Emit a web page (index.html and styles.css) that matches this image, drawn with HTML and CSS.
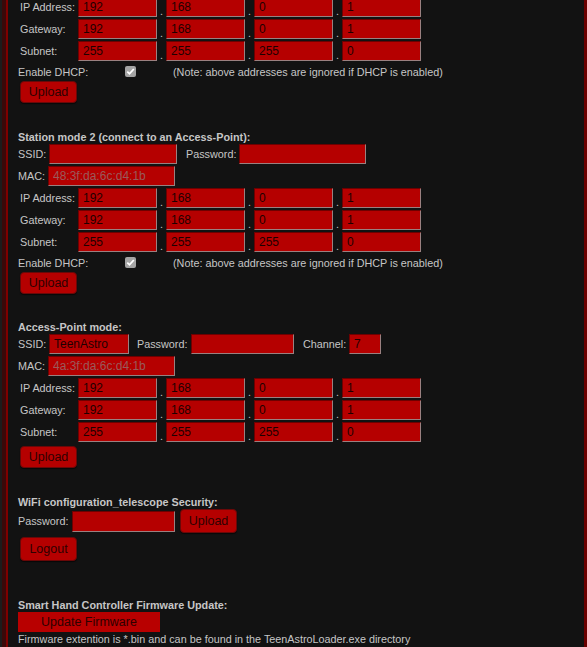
FILE: index.html
```html
<!DOCTYPE html>
<html lang="en">
<head>
  <meta charset="UTF-8">
  <meta name="viewport" content="width=device-width, initial-scale=1.0">
  <title>TeenAstro WiFi</title>
  <link rel="stylesheet" href="styles.css">
</head>
<body>
<div class="frame">
  <div class="page">

    <!-- Station mode 1 (addresses) -->
    <form class="block first">
      <div class="ip-row"><span class="lbl">IP Address:</span><input class="octet" value="192"><span class="dot">.</span><input class="octet" value="168"><span class="dot">.</span><input class="octet" value="0"><span class="dot">.</span><input class="octet" value="1"></div>
      <div class="ip-row"><span class="lbl">Gateway:</span><input class="octet" value="192"><span class="dot">.</span><input class="octet" value="168"><span class="dot">.</span><input class="octet" value="0"><span class="dot">.</span><input class="octet" value="1"></div>
      <div class="ip-row"><span class="lbl">Subnet:</span><input class="octet" value="255"><span class="dot">.</span><input class="octet" value="255"><span class="dot">.</span><input class="octet" value="255"><span class="dot">.</span><input class="octet" value="0"></div>
      <div class="dhcp-row">
        <span class="dhcp-lbl">Enable DHCP:</span>
        <span class="check"><svg viewBox="0 0 11 11" width="11" height="11"><path d="M2.3 5.6 L4.5 7.8 L8.8 3" fill="none" stroke="#fff" stroke-width="1.8"/></svg></span>
        <span class="note">(Note: above addresses are ignored if DHCP is enabled)</span>
      </div>
      <button type="button" class="btn">Upload</button>
    </form>

    <!-- Station mode 2 -->
    <form class="block sta2">
      <div class="title">Station mode 2 (connect to an Access-Point):</div>
      <div class="field-row">
        <span class="lbl w31">SSID:</span><input class="txt w128" value="">
        <span class="lbl ml9 w53">Password:</span><input class="txt w127" type="password" value="">
      </div>
      <div class="field-row">
        <span class="lbl w30">MAC:</span><input class="txt w127 mac" value="48:3f:da:6c:d4:1b" disabled>
      </div>
      <div class="ip-row"><span class="lbl">IP Address:</span><input class="octet" value="192"><span class="dot">.</span><input class="octet" value="168"><span class="dot">.</span><input class="octet" value="0"><span class="dot">.</span><input class="octet" value="1"></div>
      <div class="ip-row"><span class="lbl">Gateway:</span><input class="octet" value="192"><span class="dot">.</span><input class="octet" value="168"><span class="dot">.</span><input class="octet" value="0"><span class="dot">.</span><input class="octet" value="1"></div>
      <div class="ip-row"><span class="lbl">Subnet:</span><input class="octet" value="255"><span class="dot">.</span><input class="octet" value="255"><span class="dot">.</span><input class="octet" value="255"><span class="dot">.</span><input class="octet" value="0"></div>
      <div class="dhcp-row">
        <span class="dhcp-lbl">Enable DHCP:</span>
        <span class="check"><svg viewBox="0 0 11 11" width="11" height="11"><path d="M2.3 5.6 L4.5 7.8 L8.8 3" fill="none" stroke="#fff" stroke-width="1.8"/></svg></span>
        <span class="note">(Note: above addresses are ignored if DHCP is enabled)</span>
      </div>
      <button type="button" class="btn">Upload</button>
    </form>

    <!-- Access-Point mode -->
    <form class="block">
      <div class="title">Access-Point mode:</div>
      <div class="field-row">
        <span class="lbl w31">SSID:</span><input class="txt w80" value="TeenAstro">
        <span class="lbl ml8 w54">Password:</span><input class="txt w103" type="password" value="">
        <span class="lbl ml9 w46">Channel:</span><input class="txt w32" value="7">
      </div>
      <div class="field-row">
        <span class="lbl w30">MAC:</span><input class="txt w127 mac" value="4a:3f:da:6c:d4:1b" disabled>
      </div>
      <div class="ip-row"><span class="lbl">IP Address:</span><input class="octet" value="192"><span class="dot">.</span><input class="octet" value="168"><span class="dot">.</span><input class="octet" value="0"><span class="dot">.</span><input class="octet" value="1"></div>
      <div class="ip-row"><span class="lbl">Gateway:</span><input class="octet" value="192"><span class="dot">.</span><input class="octet" value="168"><span class="dot">.</span><input class="octet" value="0"><span class="dot">.</span><input class="octet" value="1"></div>
      <div class="ip-row"><span class="lbl">Subnet:</span><input class="octet" value="255"><span class="dot">.</span><input class="octet" value="255"><span class="dot">.</span><input class="octet" value="255"><span class="dot">.</span><input class="octet" value="0"></div>
      <button type="button" class="btn btn-gap">Upload</button>
    </form>

    <!-- Security -->
    <form class="block sec">
      <div class="title">WiFi configuration_telescope Security:</div>
      <div class="pw-row">
        <span class="lbl w54">Password:</span><input class="txt w103 h21" type="password" value="">
        <button type="button" class="btn tall">Upload</button>
      </div>
      <button type="button" class="btn tall logout">Logout</button>
    </form>

    <!-- Firmware -->
    <form class="block fw">
      <div class="title">Smart Hand Controller Firmware Update:</div>
      <button type="button" class="fw-btn">Update Firmware</button>
      <div class="fw-note">Firmware extention is *.bin and can be found in the TeenAstroLoader.exe directory</div>
    </form>

  </div>
</div>
</body>
</html>
```

FILE: styles.css
```css
body {
  margin: 0;
  background: #1c1c1c;
  font-family: "Liberation Sans", Arial, sans-serif;
  font-size: 10.8px;
  color: #c6c6c6;
}

/* dark red frame around the page */
.frame {
  margin-left: 2px;
  border-left: 4px solid #3a0909;
}

.page {
  display: flow-root;
  min-height: 100vh;
  background: #121212;
  border-left: 2px solid #7e0000;
  border-right: 3px solid #6a0000;
  padding-left: 10px;
}

.block {
  margin: 26px 0 0 0;
}

.block.first {
  margin-top: -3px;
}

.block.sta2,
.block.sec {
  margin-top: 27px;
}

.block.fw {
  margin-top: 37px;
}

.title {
  font-weight: bold;
  line-height: 14px;
  height: 14px;
}

.lbl {
  white-space: nowrap;
  flex: none;
}

/* address rows : four octets with dots */
.ip-row {
  display: flex;
  align-items: center;
  height: 20px;
  margin-bottom: 2px;
  padding-left: 2px;
}

.ip-row .lbl {
  width: 58px;
}

.octet,
.txt {
  box-sizing: border-box;
  height: 20px;
  margin: 0;
  padding: 0 0 0 4px;
  background: #b50000;
  border: 1px solid;
  border-color: #6e0000 #9a8080 #9a8080 #6e0000;
  color: #1e0000;
  font-family: "Liberation Sans", Arial, sans-serif;
  font-size: 12px;
  outline: none;
  flex: none;
}

.octet {
  width: 79px;
}

.txt.mac {
  color: #9a5a5a;
}

.dot {
  width: 9px;
  text-align: center;
  align-self: flex-end;
  line-height: 12px;
  flex: none;
}

.field-row {
  display: flex;
  align-items: center;
  height: 20px;
  margin-bottom: 2px;
}

.w30 { width: 30px; }
.w31 { width: 31px; }
.w32 { width: 32px; }
.w46 { width: 46px; }
.w53 { width: 53px; }
.w54 { width: 54px; }
.w80 { width: 80px; }
.w103 { width: 103px; }
.w127 { width: 127px; }
.w128 { width: 128px; }
.ml8 { margin-left: 8px; }
.ml9 { margin-left: 9px; }
.h21 { height: 21px; }

/* DHCP line */
.dhcp-row {
  display: flex;
  align-items: center;
  height: 18px;
}

.dhcp-lbl {
  width: 107px;
}

.check {
  width: 11px;
  height: 11px;
  border-radius: 2px;
  background: #a4a4a4;
  display: flex;
  margin-top: -2px;
}

.note {
  margin-left: 37px;
}

/* buttons */
.btn {
  display: block;
  box-sizing: border-box;
  width: 57px;
  height: 22px;
  margin: 0 0 0 2px;
  padding: 0;
  background: #b50000;
  border: 1px solid #6a0808;
  border-radius: 4px;
  box-shadow: 0 1px 1px rgba(0, 0, 0, 0.6);
  color: #2e0000;
  font-family: "Liberation Sans", Arial, sans-serif;
  font-size: 12.5px;
  cursor: pointer;
}

.btn.tall {
  height: 24px;
}

.btn-gap {
  margin-top: 4px;
}

.pw-row {
  display: flex;
  align-items: center;
}

.pw-row .btn {
  margin-left: 5px;
}

.logout {
  margin-top: 4px;
}

.fw-btn {
  display: block;
  width: 142px;
  height: 20px;
  margin: 0;
  padding: 0;
  background: #b80000;
  border: none;
  color: #2e0000;
  font-family: "Liberation Sans", Arial, sans-serif;
  font-size: 12.5px;
}

.fw-note {
  line-height: 14px;
}
```
